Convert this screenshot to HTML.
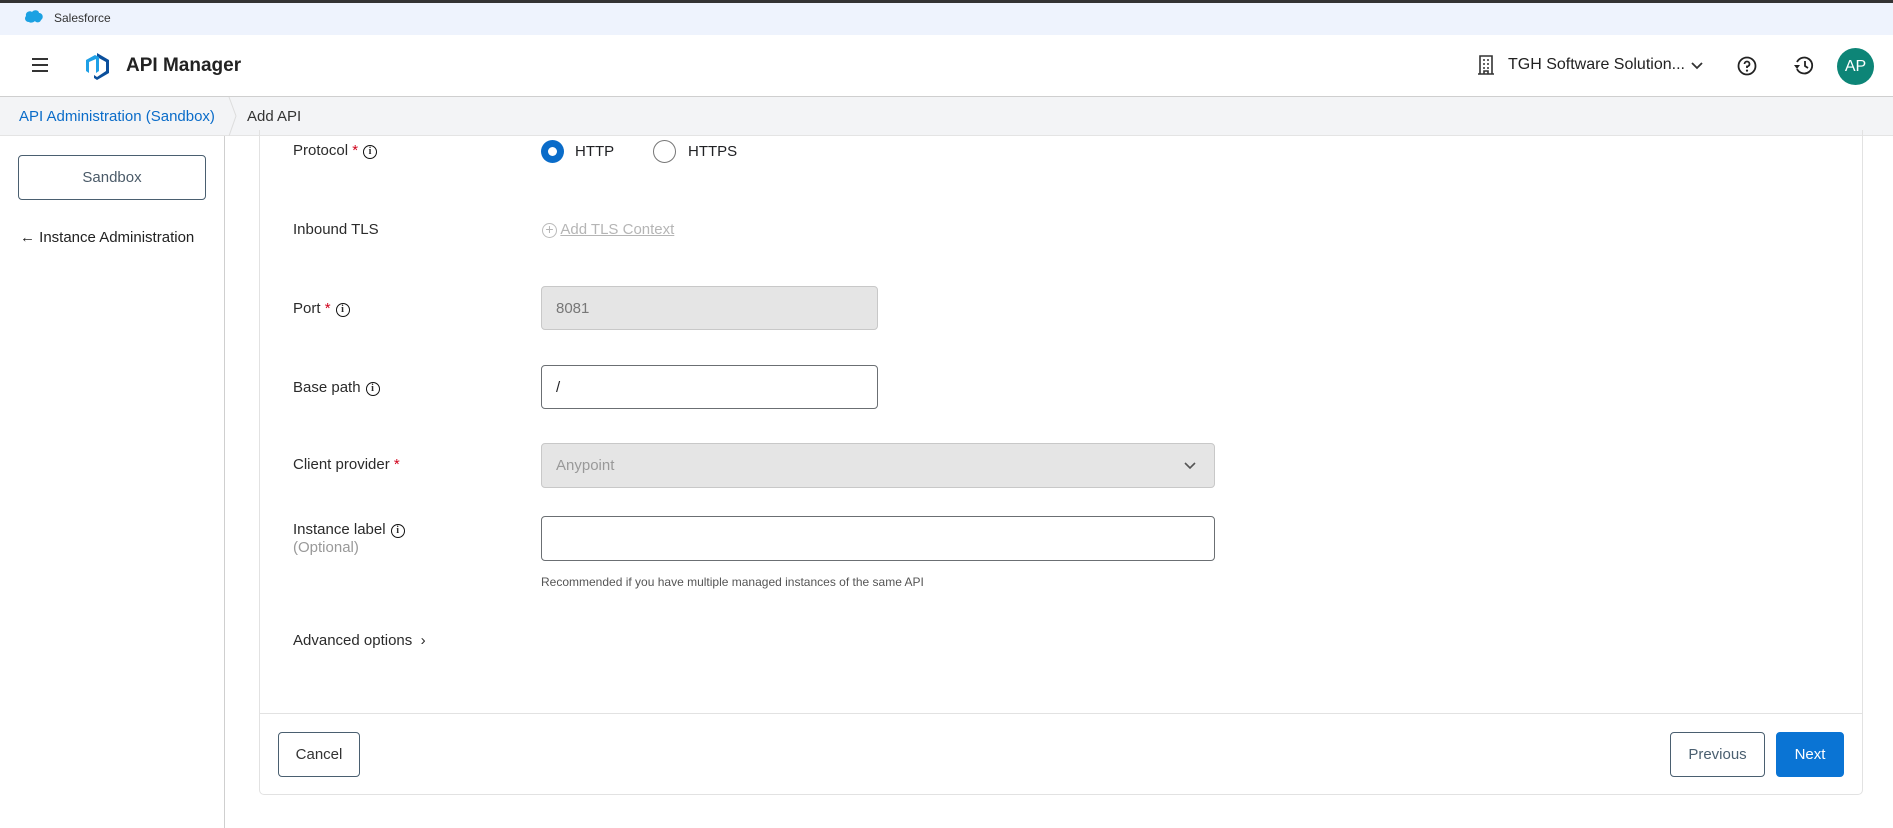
<!DOCTYPE html>
<html><head><meta charset="utf-8"><style>
*{box-sizing:border-box;margin:0;padding:0}
body{width:1893px;height:828px;overflow:hidden;background:#fff;font-family:"Liberation Sans",sans-serif;color:#202124;position:relative}
.a{position:absolute}
.lbl{position:absolute;left:293px;font-size:15px;color:#2b2b2b}
.req{color:#d0021b}
.info{display:inline-block;width:14px;height:14px;border:1.7px solid #111;border-radius:50%;font-size:10px;font-weight:bold;text-align:center;line-height:11px;vertical-align:1px;margin-left:5px;font-family:"Liberation Serif",serif}
.inp{position:absolute;left:541px;border:1px solid #6b6f73;border-radius:4px;font-size:15px;padding-left:14px;display:flex;align-items:center}
.btn{position:absolute;border:1px solid #4a5f70;border-radius:4px;font-size:15px;color:#4a5f70;display:flex;align-items:center;justify-content:center}
</style></head><body>
<div class="a" style="left:0;top:0;width:1893px;height:3px;background:#333"></div>
<div class="a" style="left:0;top:3px;width:1893px;height:32px;background:#eef3fd"></div>
<svg class="a" style="left:24px;top:9px" width="20" height="14" viewBox="0 0 20 14"><path d="M5 13C1 13 0 9 2 7 1 3 6 1 8 3 10 0 15 1 15 4 19 4 20 9 17 11 16 14 12 14 11 12 9 14 6 14 5 13Z" fill="#1ba1e2"/></svg>
<div class="a" style="left:54px;top:11px;font-size:12px;color:#333">Salesforce</div>
<div class="a" style="left:0;top:96px;width:1893px;height:1px;background:#cfcfcf"></div>
<div class="a" style="left:32px;top:58px;width:16px;height:2px;background:#333;box-shadow:0 6px 0 #333,0 12px 0 #333"></div>
<svg class="a" style="left:82px;top:51px" width="30" height="30" viewBox="0 0 30 30"><path d="M15 2 27 9 27 22 15 29 12 27 12 24 15 26 24 20 24 11 15 6Z" fill="#0b4f9c"/><path d="M4 9 13 4 17 6 17 20 14 22 14 8 7 11 7 22 4 20Z" fill="#1fa0e6"/></svg>
<div class="a" style="left:126px;top:55px;font-size:19px;font-weight:bold;color:#222">API Manager</div>
<svg class="a" style="left:1478px;top:55px" width="16" height="20" viewBox="0 0 16 20"><path d="M2 1H14V19H2ZM0 19H16M5 5H7M9 5H11M5 9H7M9 9H11M5 13H7M9 13H11M6 19V16H10V19" stroke="#333" stroke-width="1.6" fill="none"/></svg>
<div class="a" style="left:1508px;top:56px;font-size:16px;color:#222">TGH Software Solution...</div>
<svg class="a" style="left:1691px;top:62px" width="12" height="8"><path d="M1 1 6 6 11 1" stroke="#333" stroke-width="1.8" fill="none"/></svg>
<svg class="a" style="left:1737px;top:56px" width="20" height="20" viewBox="0 0 20 20"><circle cx="10" cy="10" r="8.5" stroke="#222" stroke-width="1.8" fill="none"/><path d="M7.5 8A2.5 2.5 0 1 1 10 10.5V12" stroke="#222" stroke-width="1.8" fill="none"/><circle cx="10" cy="14.6" r="1.1" fill="#222"/></svg>
<svg class="a" style="left:1792px;top:56px" width="22" height="20" viewBox="0 0 22 20"><path d="M5 13A8 8 0 1 0 5 6" stroke="#222" stroke-width="1.8" fill="none"/><path d="M2 9H8L5 13Z" fill="#222"/><path d="M13 5V10L16 12" stroke="#222" stroke-width="1.8" fill="none"/></svg>
<div class="a" style="left:1837px;top:48px;width:37px;height:37px;border-radius:50%;background:#0d8577;color:#fff;font-size:16px;display:flex;align-items:center;justify-content:center">AP</div>
<div class="a" style="left:0;top:97px;width:1893px;height:39px;background:#f3f4f6;border-bottom:1px solid #e4e4e4"></div>
<div class="a" style="left:19px;top:108px;font-size:15px;color:#0a6cc9">API Administration (Sandbox)</div>
<svg class="a" style="left:228px;top:97px" width="10" height="39"><path d="M1 0 8 19 1 39" stroke="#ddd" fill="none"/></svg>
<div class="a" style="left:247px;top:108px;font-size:15px;color:#333">Add API</div>
<div class="a" style="left:224px;top:136px;width:1px;height:692px;background:#cfcfcf"></div>
<div class="btn" style="left:18px;top:155px;width:188px;height:45px;color:#4a5a68">Sandbox</div>
<div class="a" style="left:20px;top:229px;font-size:15px;color:#222">← Instance Administration</div>
<div class="a" style="left:259px;top:130px;width:1604px;height:665px;border:1px solid #e2e2e2;border-top:none;border-radius:0 0 5px 5px"></div>
<div class="a" style="left:260px;top:713px;width:1602px;height:1px;background:#e2e2e2"></div>
<div class="lbl" style="top:142px">Protocol <span class="req">*</span><span class="info">i</span></div>
<div class="a" style="left:541px;top:140px;width:23px;height:23px;border-radius:50%;background:#0a6cc9"><div style="margin:7px;width:9px;height:9px;border-radius:50%;background:#fff"></div></div>
<div class="a" style="left:575px;top:143px;font-size:15px">HTTP</div>
<div class="a" style="left:653px;top:140px;width:23px;height:23px;border-radius:50%;border:1.5px solid #777"></div>
<div class="a" style="left:688px;top:143px;font-size:15px">HTTPS</div>
<div class="lbl" style="top:221px">Inbound TLS</div>
<div class="a" style="left:542px;top:221px;font-size:15px;color:#b5b5b5"><span style="display:inline-block;width:15px;height:15px;border:1.5px solid #bbb;border-radius:50%;text-align:center;line-height:11px;font-size:14px;vertical-align:0px">+</span> <u>Add TLS Context</u></div>
<div class="lbl" style="top:300px">Port <span class="req">*</span><span class="info">i</span></div>
<div class="inp" style="top:286px;width:337px;height:44px;background:#e5e5e5;border-color:#c8c8c8;color:#777">8081</div>
<div class="lbl" style="top:379px">Base path<span class="info">i</span></div>
<div class="inp" style="top:365px;width:337px;height:44px">/</div>
<div class="lbl" style="top:456px">Client provider <span class="req">*</span></div>
<div class="inp" style="top:443px;width:674px;height:45px;background:#e5e5e5;border-color:#c8c8c8;color:#999">Anypoint</div>
<svg class="a" style="left:1184px;top:462px" width="12" height="8"><path d="M1 1 6 6 11 1" stroke="#555" stroke-width="1.6" fill="none"/></svg>
<div class="lbl" style="top:521px">Instance label<span class="info">i</span></div>
<div class="lbl" style="top:539px;color:#999">(Optional)</div>
<div class="inp" style="top:516px;width:674px;height:45px"></div>
<div class="a" style="left:541px;top:575px;font-size:12px;color:#555">Recommended if you have multiple managed instances of the same API</div>
<div class="lbl" style="top:632px">Advanced options &nbsp;›</div>
<div class="btn" style="left:278px;top:732px;width:82px;height:45px;color:#333">Cancel</div>
<div class="btn" style="left:1670px;top:732px;width:95px;height:45px">Previous</div>
<div class="btn" style="left:1776px;top:732px;width:68px;height:45px;background:#0a74d4;border-color:#0a74d4;color:#fff">Next</div>
</body></html>
